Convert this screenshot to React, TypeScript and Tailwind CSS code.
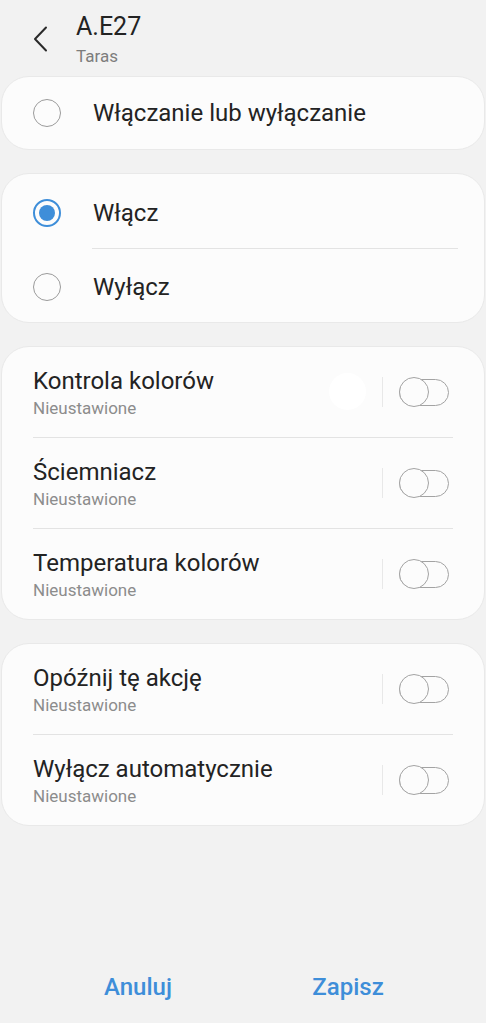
import React from "react";

const Toggle = () => (
  <div className="relative w-[50px] h-[30px] shrink-0">
    <div className="absolute left-0 top-[1.5px] w-[50px] h-[27px] rounded-full border-[1.5px] border-[#a3a3a3]" />
    <div className="absolute left-0 top-0 w-[30px] h-[30px] rounded-full border-[1.5px] border-[#a3a3a3] bg-[#fcfcfc]" />
  </div>
);

const Radio = ({ checked }: { checked?: boolean }) =>
  checked ? (
    <div className="w-[28px] h-[28px] rounded-full border-[2px] border-[#3e8ed9] flex items-center justify-center shrink-0">
      <div className="w-[16px] h-[16px] rounded-full bg-[#3e8ed9]" />
    </div>
  ) : (
    <div className="w-[28px] h-[28px] rounded-full border-[1.5px] border-[#9a9a9a] shrink-0" />
  );

const Card = ({ children }: { children: React.ReactNode }) => (
  <div className="mx-[1px] rounded-[28px] bg-[#fcfcfc] border border-[#e9e9e9] overflow-hidden">
    {children}
  </div>
);

const SettingRow = ({ title, ripple }: { title: string; ripple?: boolean }) => (
  <div className="relative flex items-center h-[90px] pl-[31px] pr-[35px]">
    {ripple && (
      <div className="absolute left-[327px] top-[26px] w-[37px] h-[37px] rounded-full bg-white" />
    )}
    <div className="flex-1 min-w-0">
      <div className="text-[24px] leading-[28px] text-[#232323]">{title}</div>
      <div className="text-[17px] leading-[20px] text-[#8c8c8c] mt-[3px]">Nieustawione</div>
    </div>
    <div className="w-px h-[30px] bg-[#e8e8e8] mr-[16px]" />
    <Toggle />
  </div>
);

const Divider = ({ left, right }: { left: string; right: string }) => (
  <div className={`h-px bg-[#e3e3e3] ${left} ${right}`} />
);

export default function App() {
  return (
    <div
      className="w-[486px] h-[1023px] bg-[#f2f2f2] flex flex-col"
      style={{ fontFamily: "Roboto, 'Noto Sans', sans-serif" }}
    >
      {/* Header */}
      <div className="h-[76px] flex items-start pt-[12px]">
        <div className="w-[76px] pl-[33px] pt-[14px]">
          <svg width="16" height="26" viewBox="0 0 16 26" fill="none">
            <polyline
              points="13,1.5 2,13 13,24.5"
              stroke="#2a2a2a"
              strokeWidth="2"
              strokeLinecap="round"
              strokeLinejoin="round"
            />
          </svg>
        </div>
        <div className="flex flex-col">
          <div className="text-[25px] leading-[30px] text-[#232323]">A.E27</div>
          <div className="text-[17px] leading-[20px] text-[#7d7d7d] mt-[4px]">Taras</div>
        </div>
      </div>

      <div className="flex flex-col gap-[23px]">
        <Card>
          <div className="h-[72px] flex items-center pl-[31px]">
            <Radio />
            <div className="ml-[32px] text-[24px] text-[#232323]">Włączanie lub wyłączanie</div>
          </div>
        </Card>

        <Card>
          <div className="h-[74px] flex items-center pl-[31px] pt-[3px]">
            <Radio checked />
            <div className="ml-[32px] text-[24px] text-[#232323]">Włącz</div>
          </div>
          <Divider left="ml-[90px]" right="mr-[26px]" />
          <div className="h-[73px] flex items-center pl-[31px] pt-[2px]">
            <Radio />
            <div className="ml-[32px] text-[24px] text-[#232323]">Wyłącz</div>
          </div>
        </Card>

        <Card>
          <SettingRow title="Kontrola kolorów" ripple />
          <Divider left="ml-[31px]" right="mr-[31px]" />
          <SettingRow title="Ściemniacz" />
          <Divider left="ml-[31px]" right="mr-[31px]" />
          <SettingRow title="Temperatura kolorów" />
        </Card>

        <Card>
          <SettingRow title="Opóźnij tę akcję" />
          <Divider left="ml-[31px]" right="mr-[31px]" />
          <SettingRow title="Wyłącz automatycznie" />
        </Card>
      </div>

      <div className="flex-1" />

      <div className="h-[72px] flex items-center justify-center">
        <div className="w-[210px] text-center text-[24px] font-medium text-[#3e8ed9]">Anuluj</div>
        <div className="w-[210px] text-center text-[24px] font-medium text-[#3e8ed9]">Zapisz</div>
      </div>
    </div>
  );
}
